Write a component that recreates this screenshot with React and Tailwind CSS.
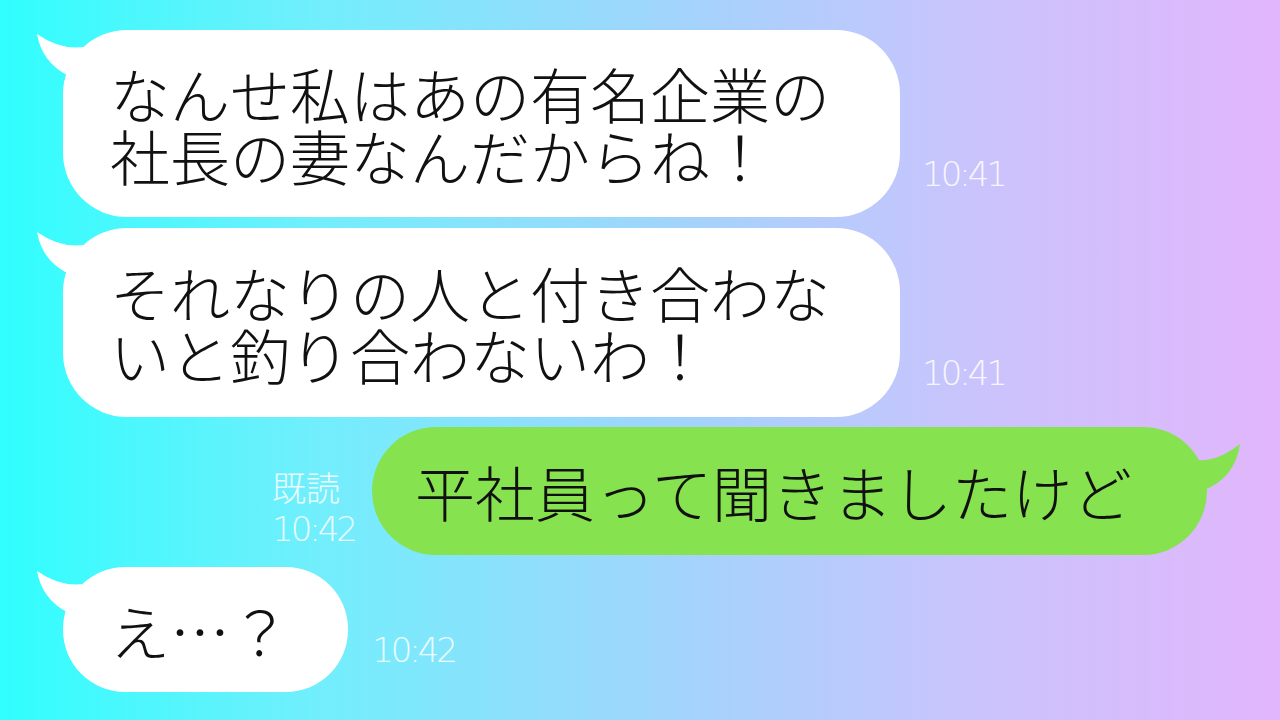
import React from "react";

const jp = { fontFamily: '"Noto Sans CJK JP", "Noto Sans", sans-serif' };
const ts = { fontFamily: '"DejaVu Sans", "Noto Sans CJK JP", sans-serif' };

function LeftTail() {
  return (
    <svg
      className="absolute left-[-30px] top-[-4px]"
      width="70"
      height="80"
      viewBox="0 0 70 80"
    >
      <path d="M4 8 Q 27 24 50 21 L 62 72 L 34 49 Q 9 36 4 8 Z" fill="#ffffff" />
    </svg>
  );
}

function RightTail() {
  return (
    <svg
      className="absolute right-[-40px] top-[-4px]"
      width="80"
      height="80"
      viewBox="0 0 80 80"
    >
      <path d="M73 21 Q 50 39 30 37 L 18 72 L 37 67 Q 68 55 73 21 Z" fill="#86e24e" />
    </svg>
  );
}

function Time({ children, className = "" }) {
  return (
    <div
      className={"text-[34px] leading-none font-extralight text-white/85 tracking-[-3px] " + className}
      style={ts}
    >
      {children}
    </div>
  );
}

export default function App() {
  return (
    <div
      className="w-[1280px] h-[720px] overflow-hidden bg-[linear-gradient(to_right,#30fefe_0%,#72eefc_25%,#a6d2fc_55%,#c8c4fc_75%,#e2b6fc_100%)]"
    >
      <div className="flex flex-col pt-[30px]">
        {/* Row 1 */}
        <div className="flex items-end pl-[63px]">
          <div className="relative w-[837px] h-[187px] bg-white rounded-[64px] flex items-center pl-[47px]">
            <LeftTail />
            <div className="relative text-[60px] leading-[62px] text-[#111] whitespace-nowrap font-light" style={jp}>
              <div>なんせ私はあの有名企業の</div>
              <div>社長の妻なんだからね！</div>
            </div>
          </div>
          <Time className="ml-[22px] mb-[26px]">10:41</Time>
        </div>

        {/* Row 2 */}
        <div className="flex items-end pl-[63px] mt-[11px]">
          <div className="relative w-[837px] h-[189px] bg-white rounded-[64px] flex items-center pl-[47px]">
            <LeftTail />
            <div className="relative text-[60px] leading-[62px] text-[#111] whitespace-nowrap font-light" style={jp}>
              <div>それなりの人と付き合わな</div>
              <div>いと釣り合わないわ！</div>
            </div>
          </div>
          <Time className="ml-[22px] mb-[27px]">10:41</Time>
        </div>

        {/* Row 3 */}
        <div className="flex items-end justify-end pr-[73px] mt-[10px]">
          <div className="flex flex-col mr-[19px] mb-[9px] w-[81px]">
            <div className="text-[34px] leading-none font-extralight text-white/85 mb-[8px]" style={jp}>
              既読
            </div>
            <Time>10:42</Time>
          </div>
          <div className="relative w-[835px] h-[128px] bg-[#86e24e] rounded-[64px] flex items-center pl-[43px]">
            <RightTail />
            <div className="relative text-[60px] leading-[62px] text-[#111] whitespace-nowrap font-light" style={jp}>
              平社員って聞きましたけど
            </div>
          </div>
        </div>

        {/* Row 4 */}
        <div className="flex items-end pl-[63px] mt-[12px]">
          <div className="relative w-[285px] h-[125px] bg-white rounded-[62px] flex items-center pl-[47px]">
            <LeftTail />
            <div className="relative text-[60px] leading-[62px] text-[#111] whitespace-nowrap font-light" style={jp}>
              え…？
            </div>
          </div>
          <Time className="ml-[24px] mb-[25px]">10:42</Time>
        </div>
      </div>
    </div>
  );
}
